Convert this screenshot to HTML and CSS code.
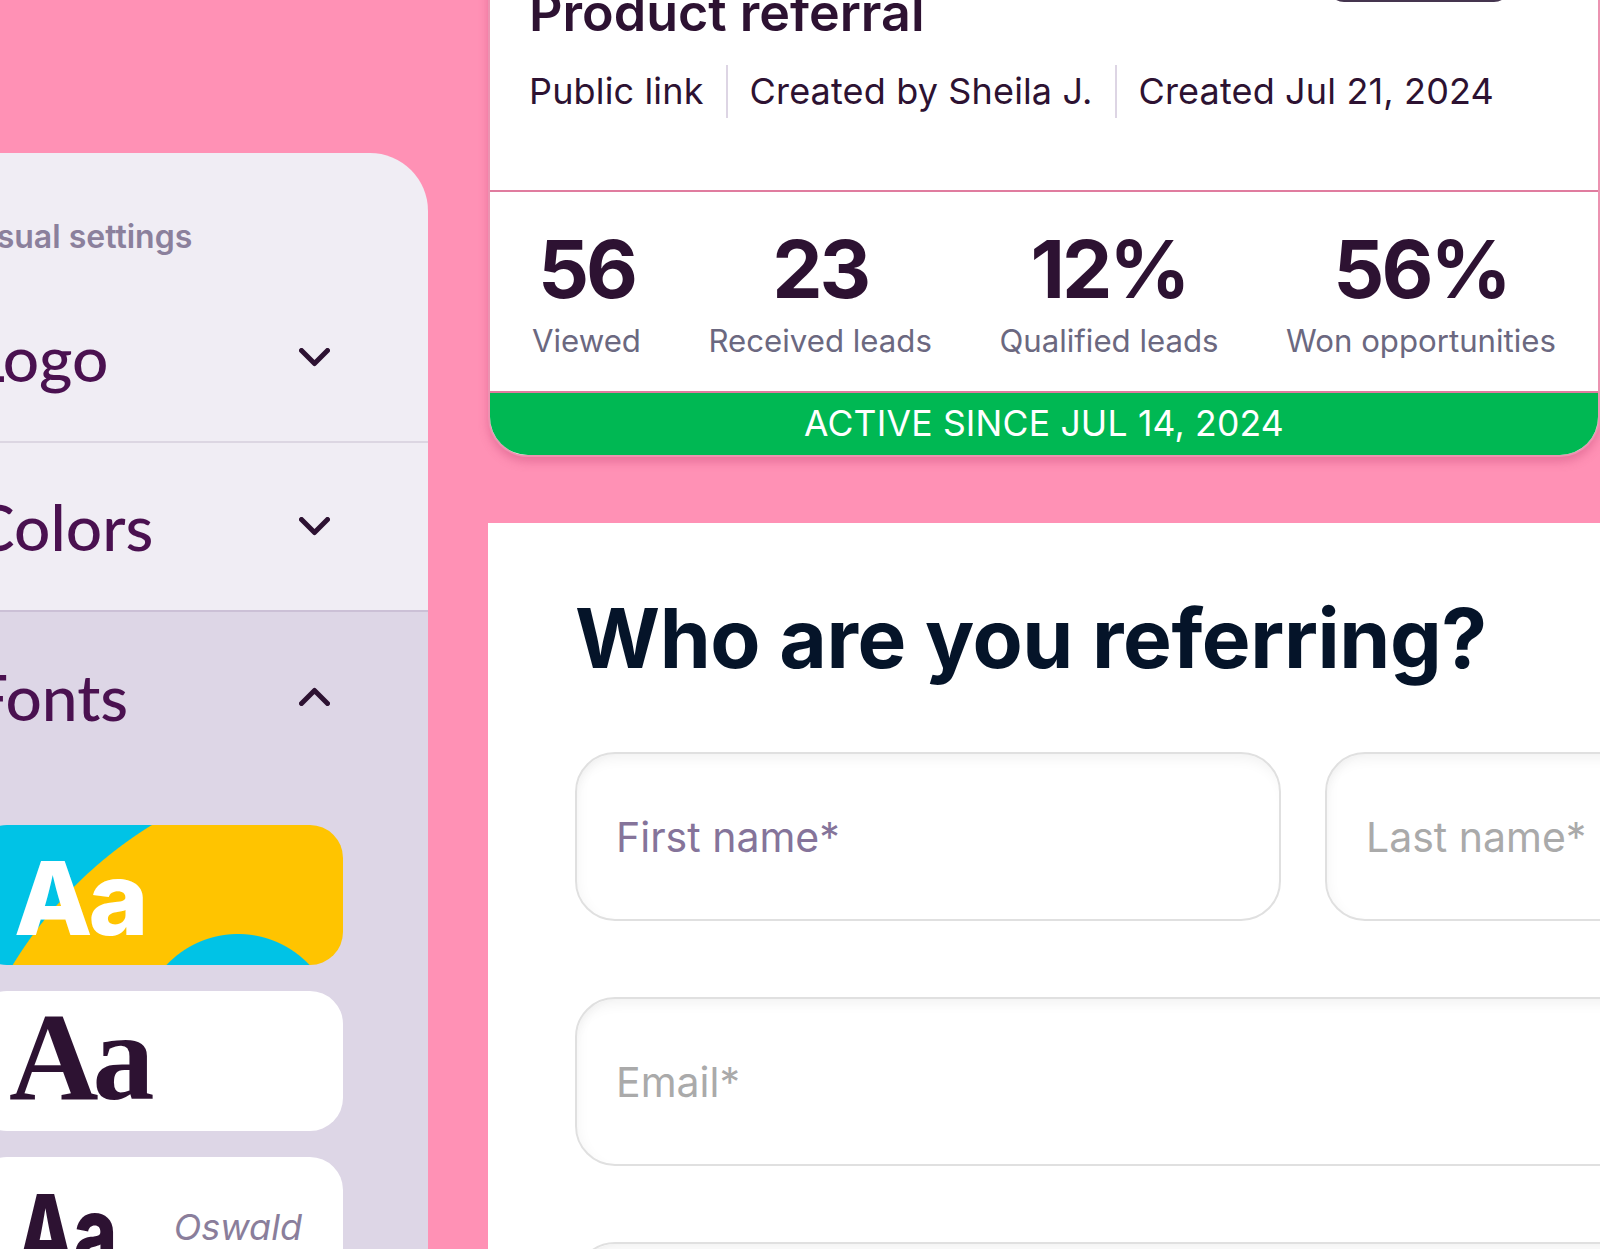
FILE: index.html
```html
<!DOCTYPE html>
<html lang="en">
<head>
<meta charset="utf-8">
<title>Product referral</title>
<link rel="stylesheet" href="styles.css">
</head>
<body>
<div class="stage">
  <aside class="sidebar">
    <div class="side-title">Visual settings</div>
    <div class="acc-row">
      <span class="acc-label">Logo</span>
      <svg class="chev" viewBox="0 0 31 19" width="31" height="19"><polyline points="2.5,2.5 15.5,15.5 28.5,2.5"/></svg>
    </div>
    <div class="acc-row acc-row-last">
      <span class="acc-label">Colors</span>
      <svg class="chev" viewBox="0 0 31 19" width="31" height="19"><polyline points="2.5,2.5 15.5,15.5 28.5,2.5"/></svg>
    </div>
    <div class="acc-open">
      <div class="acc-row acc-row-open">
        <span class="acc-label">Fonts</span>
        <svg class="chev" viewBox="0 0 31 19" width="31" height="19"><polyline points="2.5,16.5 15.5,3.5 28.5,16.5"/></svg>
      </div>
      <div class="font-list">
        <div class="font-card font-card-selected"><span class="aa aa-sans">Aa</span></div>
        <div class="font-card"><span class="aa aa-serif">Aa</span></div>
        <div class="font-card"><span class="aa aa-cond">Aa</span><span class="font-name">Oswald</span></div>
      </div>
    </div>
  </aside>

  <main class="main">
    <section class="summary-card">
      <div class="summary-head">
        <div class="head-top">
          <h1 class="title">Product referral</h1>
          <button class="head-btn" type="button">Edit</button>
        </div>
        <div class="meta">
          <span class="meta-item">Public link</span>
          <span class="meta-item">Created by Sheila J.</span>
          <span class="meta-item">Created Jul 21, 2024</span>
        </div>
      </div>
      <div class="stats">
        <div class="stat"><div class="stat-num">56</div><div class="stat-label">Viewed</div></div>
        <div class="stat"><div class="stat-num">23</div><div class="stat-label">Received leads</div></div>
        <div class="stat"><div class="stat-num">12%</div><div class="stat-label">Qualified leads</div></div>
        <div class="stat"><div class="stat-num">56%</div><div class="stat-label">Won opportunities</div></div>
      </div>
      <div class="status">ACTIVE SINCE JUL 14, 2024</div>
    </section>

    <section class="form-card">
      <h2 class="form-title">Who are you referring?</h2>
      <div class="form-grid">
        <div class="field field-active"><span>First name*</span></div>
        <div class="field"><span>Last name*</span></div>
        <div class="field field-wide"><span>Email*</span></div>
        <div class="field field-wide"><span>Company*</span></div>
      </div>
    </section>
  </main>
</div>
</body>
</html>
```

FILE: styles.css
```css
* { box-sizing: border-box; }

html, body {
  margin: 0;
  padding: 0;
}

body {
  width: 1600px;
  height: 1249px;
  overflow: hidden;
  background: #ff91b5;
  font-family: Inter, "Noto Sans", sans-serif;
  color: #2d1232;
}

.stage {
  display: flex;
  align-items: flex-start;
}

/* ---------- Sidebar ---------- */
.sidebar {
  flex: 0 0 498px;
  width: 498px;
  margin-left: -70px;
  margin-top: 153px;
  background: #f0edf4;
  border-top-right-radius: 58px;
  padding-top: 65px;
  min-height: 1200px;
}

.side-title {
  padding-left: 35px;
  font-size: 32px;
  line-height: 38px;
  font-weight: 600;
  color: #8b809c;
  margin-bottom: 18px;
  white-space: nowrap;
}

.acc-row {
  display: flex;
  align-items: center;
  height: 169px;
  padding: 0 98px 0 42px;
  border-bottom: 2px solid #dcd6e2;
}

.acc-row-last {
  border-bottom: 2px solid #cbc0d6;
}

.acc-row-open {
  height: 168px;
  border-bottom: none;
}

.acc-label {
  font-family: Lato, "Noto Sans", sans-serif;
  font-size: 64px;
  font-weight: 500;
  color: #4a1150;
  white-space: nowrap;
}

.chev {
  margin-left: auto;
  flex: 0 0 auto;
  fill: none;
  stroke: #2d1232;
  stroke-width: 5;
  stroke-linecap: round;
  stroke-linejoin: round;
}

.acc-open {
  background: #ddd6e6;
  padding-bottom: 200px;
}

.font-list {
  display: flex;
  flex-direction: column;
  gap: 26px;
  margin-top: 45px;
  padding: 0 85px 0 44px;
}

.font-card {
  height: 140px;
  background: #ffffff;
  border-radius: 33px;
  display: flex;
  align-items: center;
  padding-left: 35px;
  overflow: hidden;
}

.font-card-selected {
  padding-left: 40px;
  background:
    radial-gradient(circle 98px at 264px 207px, #00c3e6 97.5px, rgba(0,195,230,0) 98.5px),
    radial-gradient(circle 423px at 400px 360px, #ffc400 422.5px, rgba(255,196,0,0) 423.5px),
    #00c3e6;
}

.aa {
  line-height: 1;
  white-space: nowrap;
}

.aa-sans {
  font-family: Inter, sans-serif;
  font-weight: 800;
  font-size: 102px;
  letter-spacing: -4px;
  color: #ffffff;
  padding-top: 6px;
}

.aa-serif {
  font-family: "Liberation Serif", "DejaVu Serif", serif;
  font-weight: 700;
  font-size: 124px;
  letter-spacing: -6px;
  color: #2d1232;
  padding-bottom: 6px;
}

.aa-cond {
  font-family: Inter, sans-serif;
  font-weight: 800;
  font-size: 104px;
  letter-spacing: -2px;
  color: #2d1232;
  transform: scaleX(0.72);
  transform-origin: left center;
  padding-top: 10px;
  margin-left: 8px;
}

.font-name {
  margin-left: auto;
  padding-right: 41px;
  font-style: italic;
  font-size: 36px;
  color: #8a7e9b;
}

/* ---------- Main column ---------- */
.main {
  flex: 0 0 1400px;
  margin-left: 60px;
  margin-top: -60px;
}

.summary-card {
  width: 1112px;
  background: #ffffff;
  border: 2px solid #ec93b1;
  border-radius: 0 0 40px 40px;
  box-shadow: 0 5px 10px rgba(190, 60, 110, 0.35);
}

.summary-head {
  padding: 41px 88px 72px 39px;
  border-bottom: 2px solid #e07c9f;
}

.head-top {
  display: flex;
  justify-content: space-between;
  align-items: flex-end;
  height: 60px;
}

.title {
  margin: 0;
  font-size: 52px;
  line-height: 60px;
  font-weight: 600;
  color: #2d1232;
  white-space: nowrap;
}

.head-btn {
  width: 182px;
  height: 60px;
  margin-bottom: 41px;
  border: 3px solid #45354f;
  border-radius: 16px;
  background: #ffffff;
  color: #45354f;
  font-family: Inter, sans-serif;
  font-size: 28px;
}

.meta {
  display: flex;
  align-items: center;
  margin-top: 22px;
  white-space: nowrap;
}

.meta-item {
  flex: 0 0 auto;
  font-size: 36px;
  line-height: 53px;
  letter-spacing: 0.15px;
  color: #2d1232;
  padding: 0 22px;
}

.meta-item:first-child {
  padding-left: 0;
}

.meta-item + .meta-item {
  border-left: 2px solid #ddd5e4;
}

.stats {
  display: flex;
  justify-content: space-between;
  padding: 36px 42px 31px 42px;
  border-bottom: 2px solid #e07c9f;
}

.stat {
  display: flex;
  flex-direction: column;
  align-items: center;
  white-space: nowrap;
}

.stat-num {
  font-size: 80px;
  line-height: 82px;
  font-weight: 700;
  letter-spacing: -3px;
  color: #2d1232;
}

.stat-label {
  margin-top: 12px;
  font-size: 31.2px;
  line-height: 38px;
  color: #6b6880;
}

.status {
  height: 62px;
  line-height: 62px;
  background: #00b853;
  color: #ffffff;
  text-align: center;
  font-size: 35.5px;
  letter-spacing: 0.2px;
  border-radius: 0 0 38px 38px;
}

/* ---------- Form card ---------- */
.form-card {
  margin-top: 66px;
  width: 1400px;
  min-height: 900px;
  background: #ffffff;
  padding: 67px 0 0 87px;
}

.form-title {
  margin: 0;
  font-size: 82px;
  line-height: 98px;
  font-weight: 700;
  letter-spacing: -0.4px;
  color: #051429;
  white-space: nowrap;
}

.form-grid {
  margin-top: 64px;
  display: grid;
  grid-template-columns: 706px 706px;
  column-gap: 44px;
  row-gap: 76px;
}

.field {
  height: 169px;
  border: 2px solid #e0e0e0;
  border-radius: 40px;
  background: #ffffff;
  box-shadow: inset 0 12px 14px -8px rgba(0, 0, 0, 0.06), inset 10px 0 14px -10px rgba(0, 0, 0, 0.05);
  display: flex;
  align-items: center;
  padding-left: 39px;
  font-size: 41px;
  color: #aaaaaa;
  white-space: nowrap;
}

.field-active {
  color: #85749a;
}

.field-wide {
  grid-column: 1 / span 2;
}
```
